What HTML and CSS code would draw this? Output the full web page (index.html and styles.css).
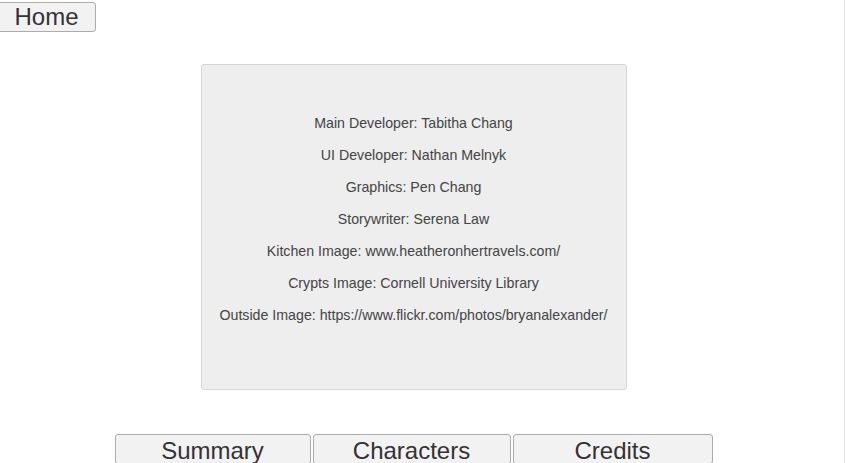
FILE: index.html
```html
<!DOCTYPE html>
<html lang="en">
<head>
  <meta charset="UTF-8">
  <meta name="viewport" content="width=device-width, initial-scale=1.0">
  <title>Credits</title>
  <link rel="stylesheet" href="styles.css">
</head>
<body>
  <div class="page">
    <button class="home-btn">Home</button>
    <div class="credits-box">
      <p>Main Developer: Tabitha Chang</p>
      <p>UI Developer: Nathan Melnyk</p>
      <p>Graphics: Pen Chang</p>
      <p>Storywriter: Serena Law</p>
      <p>Kitchen Image: www.heatheronhertravels.com/</p>
      <p>Crypts Image: Cornell University Library</p>
      <p>Outside Image: https://www.flickr.com/photos/bryanalexander/</p>
    </div>
    <div class="tab-bar">
      <button class="tab-btn tab-summary">Summary</button>
      <button class="tab-btn tab-characters">Characters</button>
      <button class="tab-btn tab-credits">Credits</button>
    </div>
  </div>
</body>
</html>
```

FILE: styles.css
```css
/* Global */
html { background: #fff; }
body {
  margin: 0;
  font-family: 'Liberation Sans', Arial, sans-serif;
  color: #333;
  border-right: 1px solid #e6e6e6;
  width: 844px;
  height: 463px;
  overflow: hidden;
}
.page {
  width: 827px;
  padding-top: 2px;
}
/* Buttons */
.home-btn,
.tab-btn {
  font-family: 'Liberation Sans', Arial, sans-serif;
  font-size: 24px;
  color: #333;
  background: #f2f2f2;
  border: 1px solid #acacac;
  border-radius: 3px;
  padding: 0;
  height: 30px;
  line-height: 28px;
  cursor: pointer;
}
.home-btn {
  display: block;
  margin-left: -3px;
  width: 99px;
}
/* Credits panel */
.credits-box {
  width: 424px;
  height: 282px;
  margin: 32px auto 0;
  padding-top: 42px;
  background: #eeeeee;
  border: 1px solid #d6d6d6;
  border-radius: 3px;
  text-align: center;
  font-size: 14.2px;
  color: #444;
}
.credits-box p {
  margin: 0;
  line-height: 32px;
}
/* Tabs */
.tab-bar {
  display: flex;
  justify-content: center;
  gap: 2px;
  margin-top: 44px;
}
.tab-btn {
  padding-top: 4px;
  line-height: 24px;
}
.tab-summary { width: 196px; }
.tab-characters { width: 198px; }
.tab-credits { width: 200px; }
```
